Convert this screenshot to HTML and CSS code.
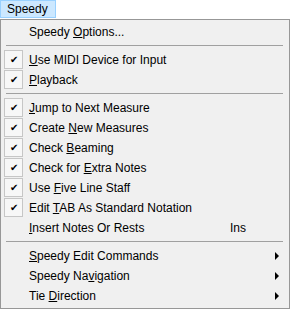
FILE: index.html
```html
<!DOCTYPE html>
<html lang="en">
<head>
  <meta charset="UTF-8" />
  <title>Speedy menu</title>
  <link rel="stylesheet" href="styles.css">
</head>
<body>

  <div class="menubar">
    <span class="menubar-item active">Speedy</span>
  </div>

  <div class="menu">
    <div class="menu-item"><span class="label">Speedy <u>O</u>ptions...</span></div>
    <div class="sep"></div>
    <div class="menu-item checked"><span class="check">&#10004;</span><span class="label"><u>U</u>se MIDI Device for Input</span></div>
    <div class="menu-item checked"><span class="check">&#10004;</span><span class="label"><u>P</u>layback</span></div>
    <div class="sep"></div>
    <div class="menu-item checked"><span class="check">&#10004;</span><span class="label"><u>J</u>ump to Next Measure</span></div>
    <div class="menu-item checked"><span class="check">&#10004;</span><span class="label">Create <u>N</u>ew Measures</span></div>
    <div class="menu-item checked"><span class="check">&#10004;</span><span class="label">Check <u>B</u>eaming</span></div>
    <div class="menu-item checked"><span class="check">&#10004;</span><span class="label">Check for <u>E</u>xtra Notes</span></div>
    <div class="menu-item checked"><span class="check">&#10004;</span><span class="label">Use <u>F</u>ive Line Staff</span></div>
    <div class="menu-item checked"><span class="check">&#10004;</span><span class="label">Edit <u>T</u>AB As Standard Notation</span></div>
    <div class="menu-item"><span class="label"><u>I</u>nsert Notes Or Rests</span><span class="shortcut">Ins</span></div>
    <div class="sep"></div>
    <div class="menu-item"><span class="label"><u>S</u>peedy Edit Commands</span><span class="arrow"></span></div>
    <div class="menu-item"><span class="label">Speedy Na<u>v</u>igation</span><span class="arrow"></span></div>
    <div class="menu-item"><span class="label">Tie <u>D</u>irection</span><span class="arrow"></span></div>
  </div>

</body>
</html>
```

FILE: styles.css
```css
* { box-sizing: border-box; margin: 0; padding: 0; }

body {
  font-family: 'Liberation Sans', Arial, sans-serif;
  font-size: 12px;
  color: #000;
  background: #fff;
  width: 290px;
  height: 309px;
  overflow: hidden;
}

.menubar {
  height: 19px;
  display: flex;
}

.menubar-item {
  height: 18px;
  padding: 0 7px 0 6px;
  line-height: 16px;
  border: 1px solid #99d1ff;
  background: #cce8ff;
}

.menu {
  width: 290px;
  height: 290px;
  border: 1px solid #979797;
  background: #f0f0f0;
  padding: 2px 2px 1px 2px;
}

.menu-item {
  position: relative;
  height: 20px;
  display: flex;
  align-items: center;
  padding-left: 26px;
}

.menu-item .label { flex: 1; }

.check {
  position: absolute;
  left: 1px;
  top: 0;
  width: 19px;
  height: 19px;
  border: 1px solid #c6c6c6;
  background: #f7f7f7;
  font-size: 10px;
  line-height: 17px;
  text-align: center;
}

.shortcut {
  width: 57px;
}

.arrow {
  width: 0;
  height: 0;
  margin-right: 8px;
  border-top: 4px solid transparent;
  border-bottom: 4px solid transparent;
  border-left: 4px solid #000;
}

.sep {
  height: 8px;
  padding-top: 3px;
  margin: 0 4px 0 3px;
}

.sep::before {
  content: "";
  display: block;
  height: 1px;
  background: #a0a0a0;
}
```
